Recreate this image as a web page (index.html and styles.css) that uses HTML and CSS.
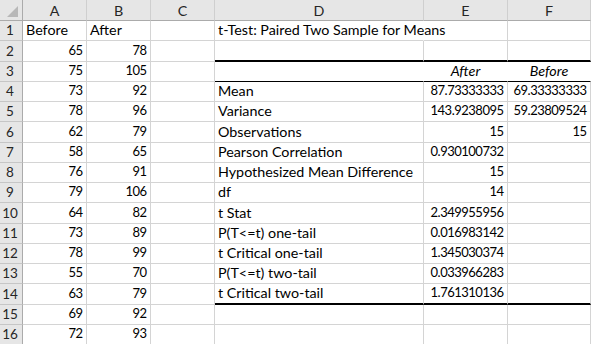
FILE: index.html
```html
<!DOCTYPE html>
<html>
<head>
<meta charset="utf-8">
<link rel="stylesheet" href="styles.css">
</head>
<body>
<div class="sheet">
  <div class="corner"><svg width="23" height="21" viewBox="0 0 23 21"><polygon points="7,17 18,6 18,17" fill="#b8b8b8"/></svg></div>
  <div class="ch">A</div><div class="ch">B</div><div class="ch">C</div><div class="ch">D</div><div class="ch">E</div><div class="ch">F</div>

  <div class="rh">1</div><div class="c">Before</div><div class="c">After</div><div class="c"></div><div class="c nr">t-Test: Paired Two Sample for Means</div><div class="c"></div><div class="c"></div>
  <div class="rh">2</div><div class="c num">65</div><div class="c num">78</div><div class="c"></div><div class="c tb"></div><div class="c tb"></div><div class="c tb"></div>
  <div class="rh">3</div><div class="c num">75</div><div class="c num">105</div><div class="c"></div><div class="c nr bt"></div><div class="c nr bt ctr it">After</div><div class="c nr bt ctr it">Before</div>
  <div class="rh">4</div><div class="c num">73</div><div class="c num">92</div><div class="c"></div><div class="c">Mean</div><div class="c num">87.73333333</div><div class="c num">69.33333333</div>
  <div class="rh">5</div><div class="c num">78</div><div class="c num">96</div><div class="c"></div><div class="c">Variance</div><div class="c num">143.9238095</div><div class="c num">59.23809524</div>
  <div class="rh">6</div><div class="c num">62</div><div class="c num">79</div><div class="c"></div><div class="c">Observations</div><div class="c num">15</div><div class="c num">15</div>
  <div class="rh">7</div><div class="c num">58</div><div class="c num">65</div><div class="c"></div><div class="c">Pearson Correlation</div><div class="c num">0.930100732</div><div class="c"></div>
  <div class="rh">8</div><div class="c num">76</div><div class="c num">91</div><div class="c"></div><div class="c">Hypothesized Mean Difference</div><div class="c num">15</div><div class="c"></div>
  <div class="rh">9</div><div class="c num">79</div><div class="c num">106</div><div class="c"></div><div class="c">df</div><div class="c num">14</div><div class="c"></div>
  <div class="rh">10</div><div class="c num">64</div><div class="c num">82</div><div class="c"></div><div class="c">t Stat</div><div class="c num">2.349955956</div><div class="c"></div>
  <div class="rh">11</div><div class="c num">73</div><div class="c num">89</div><div class="c"></div><div class="c">P(T&lt;=t) one-tail</div><div class="c num">0.016983142</div><div class="c"></div>
  <div class="rh">12</div><div class="c num">78</div><div class="c num">99</div><div class="c"></div><div class="c">t Critical one-tail</div><div class="c num">1.345030374</div><div class="c"></div>
  <div class="rh">13</div><div class="c num">55</div><div class="c num">70</div><div class="c"></div><div class="c">P(T&lt;=t) two-tail</div><div class="c num">0.033966283</div><div class="c"></div>
  <div class="rh">14</div><div class="c num">63</div><div class="c num">79</div><div class="c"></div><div class="c tb">t Critical two-tail</div><div class="c num tb">1.761310136</div><div class="c tb"></div>
  <div class="rh">15</div><div class="c num">69</div><div class="c num">92</div><div class="c"></div><div class="c"></div><div class="c"></div><div class="c"></div>
  <div class="rh">16</div><div class="c num">72</div><div class="c num">93</div><div class="c"></div><div class="c"></div><div class="c"></div><div class="c"></div>
</div>
</body>
</html>
```

FILE: styles.css
```css
html, body {
  margin: 0;
  padding: 0;
  background: #fff;
}
.sheet {
  display: grid;
  grid-template-columns: 23px 64px 64px 64px 209px 84px 83px;
  grid-template-rows: 21px repeat(16, 20.25px);
  width: 591px;
  height: 344px;
  overflow: hidden;
  font-family: Lato, "Liberation Sans", sans-serif;
  font-size: 14.3px;
}
.corner {
  background: #e6e6e6;
  border-right: 1px solid #ababab;
  border-bottom: 1px solid #ababab;
  box-sizing: border-box;
  line-height: 0;
}
.ch {
  box-sizing: border-box;
  background: #e6e6e6;
  border-right: 1px solid #cfcfcf;
  border-bottom: 1px solid #ababab;
  color: #262626;
  display: flex;
  align-items: center;
  justify-content: center;
  padding-top: 1px;
}
.rh {
  box-sizing: border-box;
  background: #e6e6e6;
  border-right: 1px solid #ababab;
  border-bottom: 1px solid #c6c6c6;
  color: #262626;
  display: flex;
  align-items: flex-end;
  justify-content: center;
  padding-bottom: 2px;
  padding-right: 2px;
  font-size: 13.5px;
}
.c {
  box-sizing: border-box;
  border-right: 1px solid #d4d4d4;
  border-bottom: 1px solid #d4d4d4;
  display: flex;
  align-items: flex-end;
  padding: 0 3px 2px 3px;
  white-space: nowrap;
  color: #000;
  min-width: 0;
}
.num {
  justify-content: flex-end;
  font-size: 13px;
  letter-spacing: -0.5px;
  padding-right: 3.5px;
  padding-bottom: 3px;
}
.ctr { justify-content: center; }
.it { font-style: italic; }
.nr { border-right-color: transparent; }
.tb { border-bottom: 2px solid #000; }
.bt { border-bottom: 1px solid #000; }
```
